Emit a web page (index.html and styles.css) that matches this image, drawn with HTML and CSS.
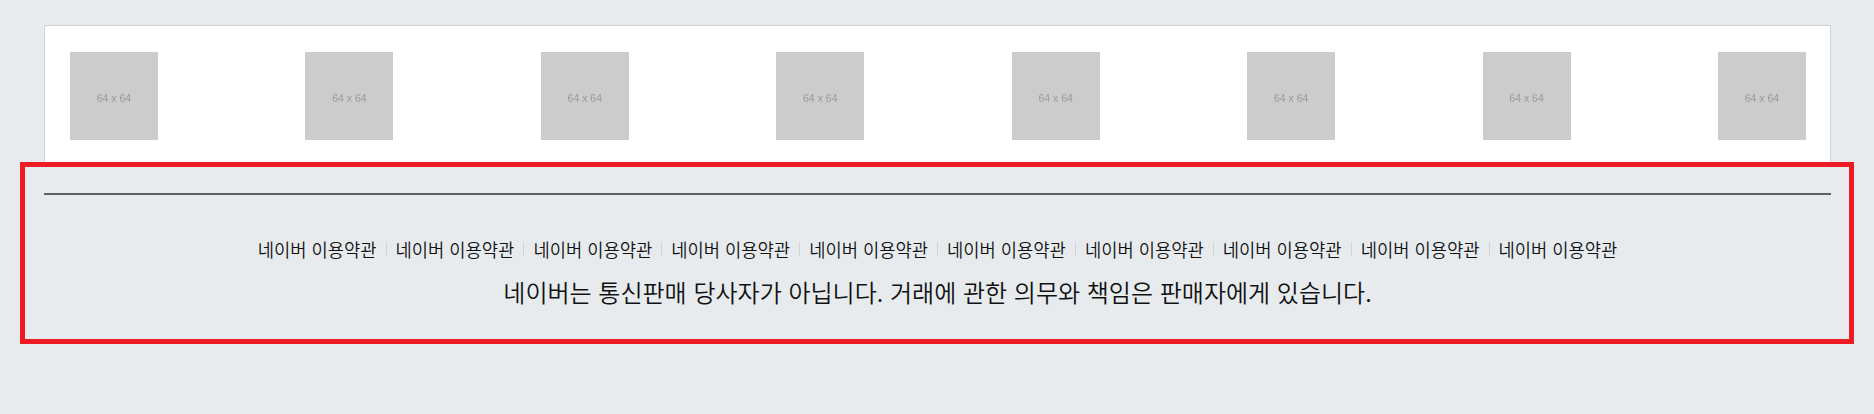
FILE: index.html
```html
<!DOCTYPE html>
<html lang="ko">
<head>
<meta charset="utf-8">
<title>Footer</title>
<link rel="stylesheet" href="styles.css">
</head>
<body>
<div class="page">
  <section class="card">
    <ul class="thumbs">
      <li class="thumb">64 x 64</li>
      <li class="thumb">64 x 64</li>
      <li class="thumb">64 x 64</li>
      <li class="thumb">64 x 64</li>
      <li class="thumb">64 x 64</li>
      <li class="thumb">64 x 64</li>
      <li class="thumb">64 x 64</li>
      <li class="thumb">64 x 64</li>
    </ul>
  </section>
</div>
<footer class="footer">
  <hr class="rule">
  <ul class="links">
    <li class="link">네이버 이용약관</li>
    <li class="link">네이버 이용약관</li>
    <li class="link">네이버 이용약관</li>
    <li class="link">네이버 이용약관</li>
    <li class="link">네이버 이용약관</li>
    <li class="link">네이버 이용약관</li>
    <li class="link">네이버 이용약관</li>
    <li class="link">네이버 이용약관</li>
    <li class="link">네이버 이용약관</li>
    <li class="link">네이버 이용약관</li>
  </ul>
  <p class="notice">네이버는 통신판매 당사자가 아닙니다. 거래에 관한 의무와 책임은 판매자에게 있습니다.</p>
</footer>
</body>
</html>
```
FILE: styles.css
```css
html, body {
  margin: 0;
  padding: 0;
  background: #e7ebee;
  font-family: "Noto Sans CJK KR", "Noto Sans", sans-serif;
  color: #222;
}

.page {
  padding: 25px 43px 0 44px;
}

.card {
  background: #fff;
  border: 1px solid #cdd3d8;
  border-bottom: none;
  padding: 26px 24px 22px 25px;
}

.thumbs {
  list-style: none;
  margin: 0;
  padding: 0;
  display: flex;
  justify-content: space-between;
}

.thumb {
  box-sizing: border-box;
  width: 88px;
  height: 88px;
  padding-top: 3px;
  background: #cccccc;
  color: #9a9a9a;
  font-family: "Liberation Sans", Arial, sans-serif;
  font-size: 10.5px;
  display: flex;
  align-items: center;
  justify-content: center;
  filter: blur(0.3px);
}

.footer {
  margin: 0 20px;
  border: 5px solid #ed1c24;
  padding: 26px 18px 32px 19px;
}

.rule {
  margin: 0;
  border: none;
  height: 2px;
  background: #606060;
}

.links {
  list-style: none;
  margin: 42px 0 0;
  padding: 0;
  display: flex;
  justify-content: center;
  align-items: center;
  font-size: 17.7px;
  line-height: 24px;
  font-weight: 350;
  color: #111;
}

.link {
  display: flex;
  align-items: center;
}

.link + .link::before {
  content: "";
  display: block;
  width: 1px;
  height: 14px;
  background: #d3d3d3;
  margin: 0 9px;
}

.notice {
  margin: 16px 0 0;
  text-align: center;
  font-size: 24px;
  line-height: 30px;
  font-weight: 350;
  color: #111;
}
```
